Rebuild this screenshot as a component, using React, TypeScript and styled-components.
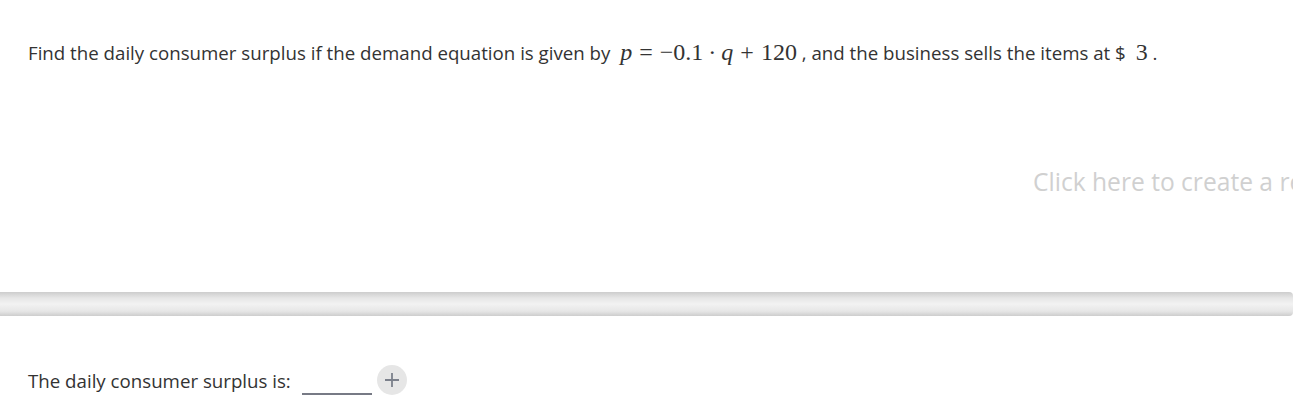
import styled, { createGlobalStyle } from "styled-components";

const GlobalStyle = createGlobalStyle`
  body {
    margin: 0;
    background: #fff;
    font-family: "Open Sans", "Liberation Sans", sans-serif;
    overflow: hidden;
  }
`;

export default function App() {
  return (
    <Page>
      <GlobalStyle />
      <Question>
        Find the daily consumer surplus if the demand equation is given by{" "}
        <Math>
          <Var>p</Var>
          <Op>=</Op>−0.1<Op $narrow>·</Op>
          <Var>q</Var>
          <Op>+</Op>120
        </Math>{" "}
        , and the business sells the items at ${" "}
        <Math>3</Math> .
      </Question>
      <ResponseArea>
        <Placeholder>Click here to create a response to this question</Placeholder>
      </ResponseArea>
      <Divider />
      <AnswerRow>
        <AnswerLabel>The daily consumer surplus is:</AnswerLabel>
        <Blank />
        <AddButton aria-label="add">
          <svg width="16" height="16" viewBox="0 0 16 16">
            <path d="M8 1v14M1 8h14" stroke="#7b808b" strokeWidth="1.8" />
          </svg>
        </AddButton>
      </AnswerRow>
    </Page>
  );
}

const Page = styled.div`
  width: 1293px;
  height: 420px;
  display: flex;
  flex-direction: column;
`;

const Question = styled.p`
  margin: 0;
  padding: 38px 0 0 28px;
  font-size: 18.7px;
  line-height: 28px;
  color: #333;
  white-space: nowrap;
`;

const Math = styled.span`
  font-family: "Liberation Serif", "DejaVu Serif", serif;
  font-size: 24px;
  color: #333;
  margin-left: 5px;
`;

const Var = styled.i`
  font-style: italic;
`;

const Op = styled.span<{ $narrow?: boolean }>`
  margin: 0 ${(p) => (p.$narrow ? "5px" : "7px")};
`;

const ResponseArea = styled.div`
  height: 225px;
  display: flex;
  align-items: flex-start;
  padding: 98px 0 0 1033px;
  box-sizing: border-box;
  overflow: hidden;
`;

const Placeholder = styled.span`
  font-size: 24.6px;
  color: #d0d0d0;
  white-space: nowrap;
`;

const Divider = styled.div`
  height: 24px;
  width: 1293px;
  border-radius: 0 4px 4px 0;
  background: linear-gradient(
    to bottom,
    #cdcdcd 0%,
    #e6e6e6 25%,
    #f2f2f2 50%,
    #e6e6e6 80%,
    #cdcdcd 100%
  );
`;

const AnswerRow = styled.div`
  display: flex;
  align-items: center;
  padding: 49px 0 0 28px;
`;

const AnswerLabel = styled.span`
  font-size: 18.7px;
  color: #333;
`;

const Blank = styled.span`
  width: 70px;
  height: 28px;
  margin-left: 11px;
  border-bottom: 2px solid #777a85;
  align-self: flex-start;
`;

const AddButton = styled.button`
  width: 30px;
  height: 30px;
  margin-left: 5px;
  border: none;
  border-radius: 50%;
  background: #e6e6e6;
  display: flex;
  align-items: center;
  justify-content: center;
  padding: 0;
`;
